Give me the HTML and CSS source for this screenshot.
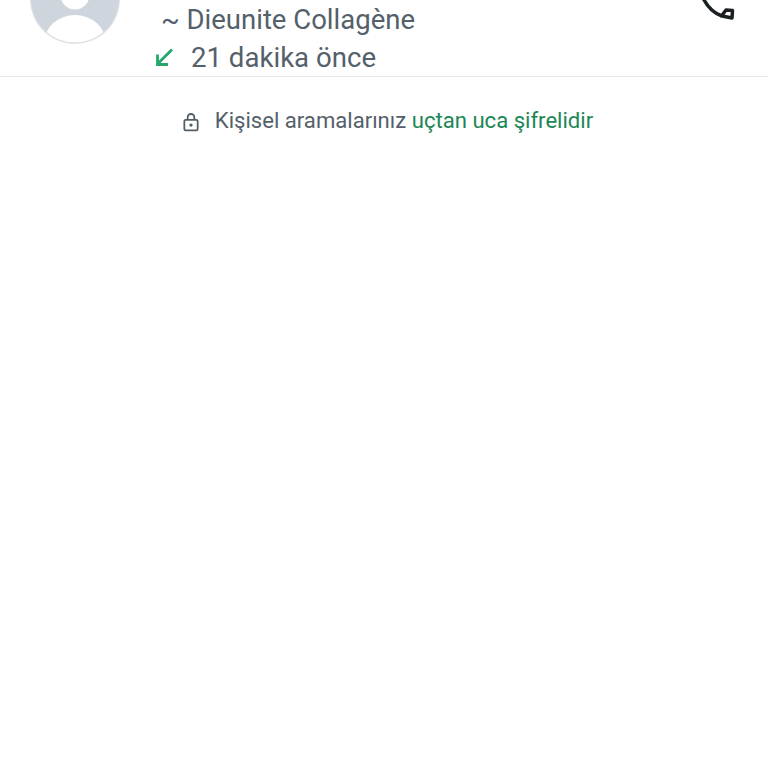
FILE: index.html
```html
<!DOCTYPE html>
<html lang="tr">
<head>
<meta charset="utf-8">
<title>Arama bilgisi</title>
<link rel="stylesheet" href="styles.css">
</head>
<body>
<header class="call-header">
  <div class="avatar">
    <svg viewBox="0 0 90 90" width="90" height="90" aria-hidden="true">
      <defs>
        <clipPath id="avatar-inner"><circle cx="45" cy="44.500" r="44"/></clipPath>
      </defs>
      <circle cx="45" cy="45" r="45" fill="#dde1e5"/>
      <circle cx="45" cy="44.500" r="44" fill="#ced5dc"/>
      <circle cx="45" cy="41" r="14.500" fill="#ffffff"/>
      <ellipse cx="45" cy="89" rx="31" ry="28" fill="#ffffff" clip-path="url(#avatar-inner)"/>
    </svg>
  </div>
  <div class="details">
    <div class="name">~ Dieunite Collagène</div>
    <div class="time-row">
      <svg class="arrow" viewBox="0 0 20 20" width="20" height="20" aria-hidden="true">
        <path d="M17 1.500 L3 15.500 M2.500 6.500 V16.500 H13" fill="none" stroke="#25a76b" stroke-width="2.800"/>
      </svg>
      <span>21 dakika önce</span>
    </div>
  </div>
  <svg class="phone" viewBox="0 0 40 24" width="40" height="24" aria-hidden="true">
    <path d="M5 -2 C9 6 15 13 24 16 L34 18 L34.500 10.500 L28 10 L23.500 16" fill="none" stroke="#1b2023" stroke-width="3.500" stroke-linejoin="round" stroke-linecap="round"/>
  </svg>
</header>
<main class="notice">
  <svg class="lock" viewBox="0 0 16 18" width="18" height="20" aria-hidden="true">
    <rect x="2" y="7" width="12" height="9.500" rx="1.200" fill="none" stroke="#545e66" stroke-width="1.600"/>
    <path d="M5 7 V4.800 a3 3 0 0 1 6 0 V7" fill="none" stroke="#545e66" stroke-width="1.600"/>
    <circle cx="8" cy="11.800" r="1.500" fill="#545e66"/>
  </svg>
  <p class="notice-text">Kişisel aramalarınız <span class="link">uçtan uca şifrelidir</span></p>
</main>
</body>
</html>
```
FILE: styles.css
```css
html, body {
  margin: 0;
  padding: 0;
  background: #ffffff;
  overflow: hidden;
  height: 768px;
}
body {
  font-family: Roboto, "Noto Sans", sans-serif;
  color: #54606a;
}
.call-header {
  display: flex;
  align-items: flex-end;
  height: 76px;
  border-bottom: 1px solid #e6e8ea;
  padding-left: 30px;
  position: relative;
}
.avatar {
  align-self: flex-start;
  margin-top: -46px;
  width: 90px;
  height: 90px;
  flex: none;
}
.avatar svg { display: block; }
.details {
  display: flex;
  flex-direction: column;
  margin-left: 35px;
  margin-bottom: -1px;
}
.name {
  font-size: 27.500px;
  line-height: 38px;
  margin-left: 6px;
  white-space: nowrap;
}
.time-row {
  display: flex;
  align-items: center;
  gap: 16px;
  font-size: 27.600px;
  line-height: 38px;
}
.arrow { flex: none; }
.phone {
  position: absolute;
  top: 0;
  left: 698px;
}
.notice {
  display: flex;
  align-items: center;
  justify-content: center;
  gap: 15px;
  margin-top: 25px;
  height: 36px;
  padding-left: 7px;
}
.notice-text {
  margin: 0;
  font-size: 22.100px;
  line-height: 36px;
  white-space: nowrap;
}
.link { color: #1b8755; }
.lock {
  flex: none;
  margin-top: 3px;
}
```
